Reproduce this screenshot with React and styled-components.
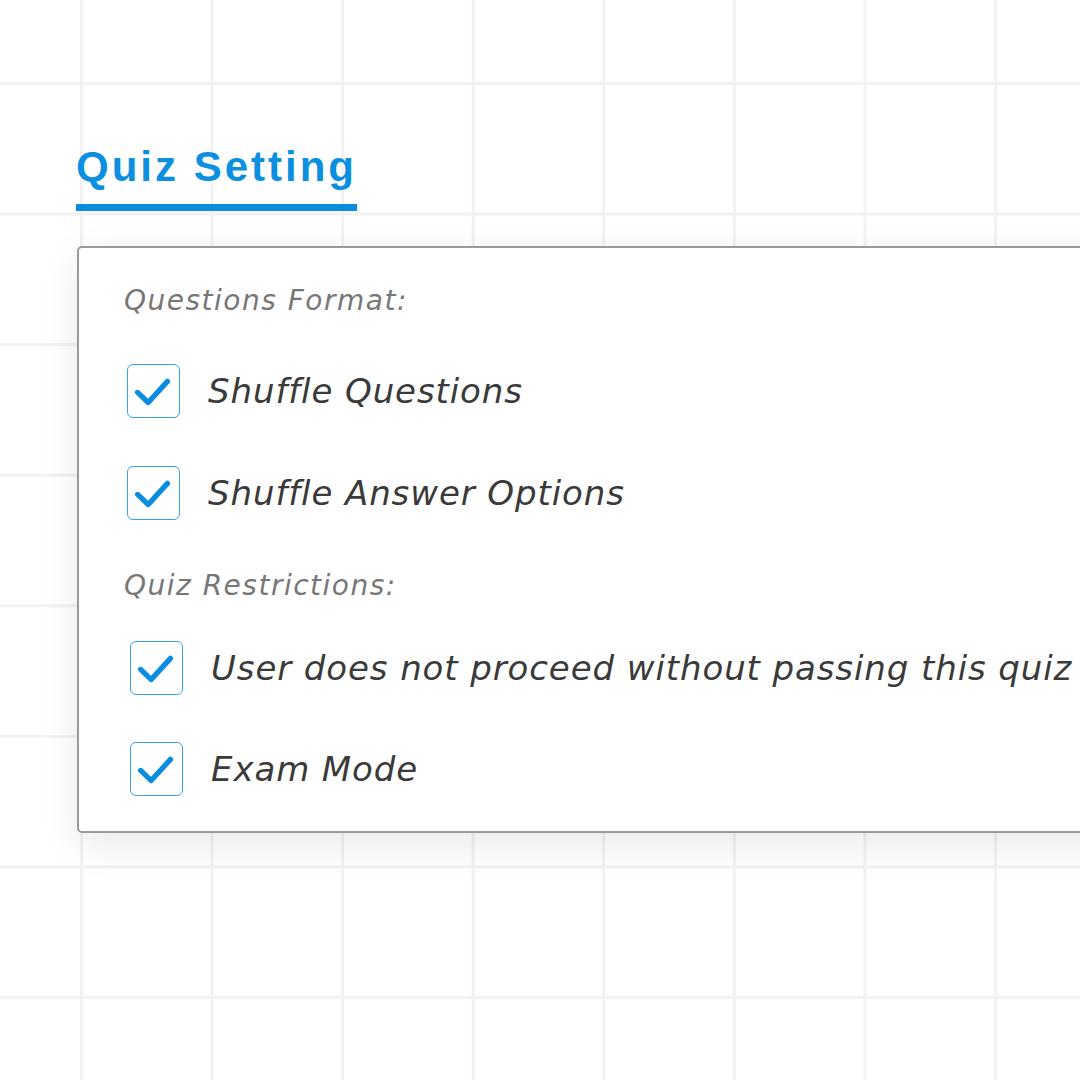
import React from 'react'
import styled, { createGlobalStyle } from 'styled-components'

const Global = createGlobalStyle`
  html, body { margin: 0; padding: 0; background: #fff; }
  body { overflow: hidden; }
`

const Page = styled.div`
  width: 1080px;
  height: 1080px;
  overflow: hidden;
  background-color: #fff;
  background-image:
    linear-gradient(to right, #f2f2f2 3px, transparent 3px),
    linear-gradient(to bottom, #f2f2f2 3px, transparent 3px);
  background-size: 130.57px 130.57px;
  background-position: 80px 82px;
  padding-top: 135px;
  box-sizing: border-box;
`

const Title = styled.h1`
  margin: 0 0 0 76px;
  display: inline-block;
  font-family: "Liberation Sans", Arial, sans-serif;
  font-weight: 700;
  font-size: 42px;
  letter-spacing: 3px;
  line-height: 64px;
  color: #0b8fe0;
  padding-bottom: 5px;
  border-bottom: 7px solid #0a8de0;
`

const Card = styled.div`
  margin: 35px 0 0 77px;
  width: 1100px;
  box-sizing: border-box;
  border: 2px solid #9a9a9a;
  border-radius: 5px;
  background: #fff;
  box-shadow: 0 12px 40px rgba(0, 0, 0, 0.09);
  padding: 33px 0 35px 45px;
`

const SectionLabel = styled.div`
  font-family: "DejaVu Sans", sans-serif;
  font-style: italic;
  font-size: 28px;
  letter-spacing: 1.5px;
  line-height: 40px;
  color: #777;
  margin-top: ${p => p.$top || 0}px;
`

const Row = styled.div`
  display: flex;
  align-items: center;
  gap: 28px;
  height: 54px;
  padding-left: ${p => p.$indent || 0}px;
  margin-top: ${p => p.$top || 0}px;
  white-space: nowrap;
`

const Box = styled.div`
  width: 53px;
  height: 54px;
  flex: none;
  box-sizing: border-box;
  border: 1.5px solid #3aa0ea;
  border-radius: 6px;
  display: flex;
  align-items: center;
  justify-content: center;
`

const Text = styled.span`
  font-family: "DejaVu Sans", sans-serif;
  font-style: italic;
  font-size: 34px;
  letter-spacing: 0.9px;
  font-variant-ligatures: none;
  color: #3a3a3a;
`

const Check = () => (
  <Box>
    <svg width="53" height="54" viewBox="0 0 53 54">
      <polyline points="10,28.5 21,39 41,17" fill="none" stroke="#0a8de0" strokeWidth="5.5" strokeLinecap="round" strokeLinejoin="round" />
    </svg>
  </Box>
)

const Option = ({ children, top, indent }) => (
  <Row $top={top} $indent={indent}>
    <Check />
    <Text>{children}</Text>
  </Row>
)

export default function App() {
  return (
    <Page>
      <Global />
      <Title>Quiz Setting</Title>
      <Card>
        <SectionLabel>Questions Format:</SectionLabel>
        <Option top={43} indent={3}>Shuffle Questions</Option>
        <Option top={48} indent={3}>Shuffle Answer Options</Option>
        <SectionLabel $top={46}>Quiz Restrictions:</SectionLabel>
        <Option top={35} indent={6}>User does not proceed without passing this quiz</Option>
        <Option top={47} indent={6}>Exam Mode</Option>
      </Card>
    </Page>
  )
}
